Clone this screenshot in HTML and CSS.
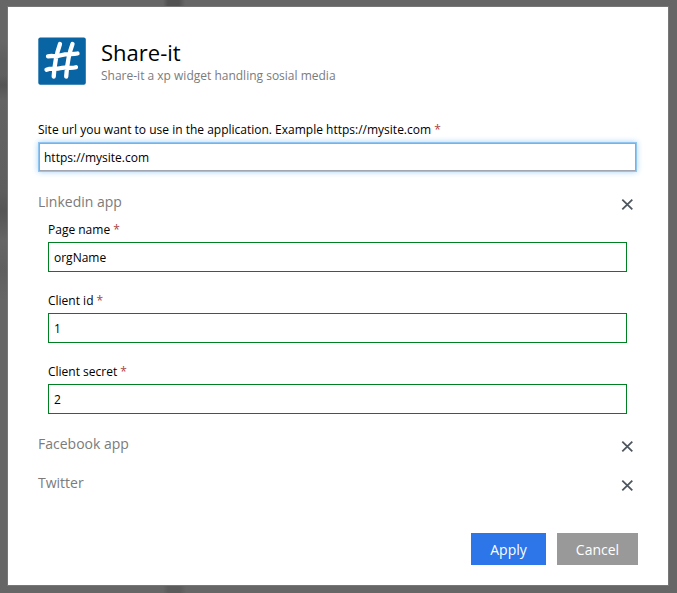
FILE: index.html
```html
<!DOCTYPE html>
<html lang="en">
<head>
<meta charset="utf-8">
<title>Share-it</title>
<link rel="stylesheet" href="styles.css">
</head>
<body>
<main class="dialog">
  <header class="header">
    <svg class="logo" viewBox="0 0 48 48" aria-hidden="true">
      <rect x=".3" y=".4" width="47.5" height="47.4" rx="2" fill="#0864a3"/>
      <g fill="none" stroke="#fff" stroke-width="4.3" stroke-linecap="round">
        <path d="M22 7C19.500 14 16.500 27 15.700 39.500M34.500 7C31.500 15 29 28 28.200 39.500M10 19.300C15 18.300 17 20.200 23 18.200S34 17.700 39.500 16.500M8.500 32.700C14 30.500 17 32.700 22 31.200S32 32 38 30.200"/>
      </g>
    </svg>
    <div class="heading">
      <h1 class="title">Share-it</h1>
      <p class="subtitle">Share-it a xp widget handling sosial media</p>
    </div>
  </header>
  <form class="form">
    <label class="label" for="site">Site url you want to use in the application. Example https://mysite.com <span class="required">*</span></label>
    <input class="input input-focused" id="site" value="https://mysite.com">
    <section class="group group-open">
      <div class="group-header"><h2 class="group-title">Linkedin app</h2><svg class="close" viewBox="0 0 12 12"><path d="M1.300 1.600L11.300 11.300M11.300 1.600L1.300 11.300"/></svg></div>
      <div class="fields">
        <div class="field"><label class="label" for="page">Page name <span class="required">*</span></label><input class="input" id="page" value="orgName"></div>
        <div class="field"><label class="label" for="client">Client id <span class="required">*</span></label><input class="input" id="client" value="1"></div>
        <div class="field"><label class="label" for="secret">Client secret <span class="required">*</span></label><input class="input" id="secret" value="2"></div>
      </div>
    </section>
    <section class="group">
      <div class="group-header"><h2 class="group-title">Facebook app</h2><svg class="close" viewBox="0 0 12 12"><path d="M1.300 1.600L11.300 11.300M11.300 1.600L1.300 11.300"/></svg></div>
    </section>
    <section class="group">
      <div class="group-header"><h2 class="group-title">Twitter</h2><svg class="close" viewBox="0 0 12 12"><path d="M1.300 1.600L11.300 11.300M11.300 1.600L1.300 11.300"/></svg></div>
    </section>
    <footer class="actions">
      <button class="button apply" type="button">Apply</button>
      <button class="button cancel" type="button">Cancel</button>
    </footer>
  </form>
</main>
</body>
</html>
```
FILE: styles.css
```css
* { box-sizing: border-box; }
body {
  margin: 0;
  height: 593px;
  padding: 7px 9px 8px 8px;
  overflow: hidden;
  background:
    linear-gradient(90deg, transparent 163px, #525252 168px, #525252 179px, transparent 185px) 0 0 / 100% 7px no-repeat,
    linear-gradient(90deg, transparent 163px, #5b5b5b 168px, #5b5b5b 180px, transparent 186px) 0 100% / 100% 8px no-repeat,
    linear-gradient(#666 40px, #5f5f5f 60px, #5f5f5f 75px, #555 85px, #636363 100px, #5e5e5e 190px, #555 212px, #656565 240px, #5f5f5f 270px, #666 300px) 0 0 / 8px 100% no-repeat,
    #666;
  font-family: "Open Sans", sans-serif;
  color: #000;
}
.dialog {
  height: 578px;
  padding: 30px 31px 20px 30px;
  background: #fff;
  box-shadow: 0 0 0 1px #777;
}
.header { display: flex; gap: 15px; height: 84px; }
.logo { width: 48px; height: 48px; }
.title { margin: 0; font-size: 22px; line-height: 30px; font-weight: 400; }
.subtitle { margin: 0; font-size: 12px; line-height: 17px; color: #7b7b7b; }
.label { display: block; height: 21px; font-size: 12px; line-height: 17px; }
.required { color: #a94442; }
.input {
  display: block;
  width: 100%;
  height: 30px;
  padding: 0 5px;
  border: 1px solid #008022;
  outline: none;
  background: #fff;
  font: 12px "Open Sans", sans-serif;
  color: #000;
}
.input-focused {
  height: 28px;
  margin: 1px;
  width: 597px;
  padding: 0 4px;
  border-color: #a0a6b2;
  box-shadow: 0 0 0 1px #91c5f1, 0 0 6px 1px #a9d3f6;
}
.form { display: flex; flex-direction: column; }
.group { height: 39px; }
.group-open { height: 242px; margin-top: 20px; }
.group-header { display: flex; justify-content: space-between; height: 29px; padding-right: 4px; }
.group-title { margin: 0; font-size: 14px; line-height: 20px; font-weight: 400; color: #7b7b7b; }
.close { width: 12px; height: 12px; margin-top: 6px; fill: none; stroke: #4d565f; stroke-width: 1.8; }
.fields { padding: 0 10px; }
.field { height: 71px; }
.actions { display: flex; justify-content: flex-end; gap: 11px; margin: 21px -1px 0 0; }
.button { height: 32px; padding: 0; border: 0; font: 14px "Open Sans", sans-serif; color: #fff; }
.apply { width: 75px; background: #2c76e9; }
.cancel { width: 81px; background: #999; }
```
